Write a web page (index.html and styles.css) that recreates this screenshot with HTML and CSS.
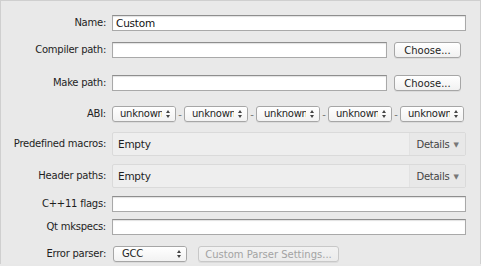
FILE: index.html
```html
<!DOCTYPE html>
<html lang="en">

<head>
	<meta charset="UTF-8">
	<title>Toolchain settings</title>
	<link rel="stylesheet" href="styles.css">
</head>

<body>

	<div class="panel">
		<div class="row row-name">
			<label class="label">Name:</label>
			<input class="field" type="text" value="Custom">
		</div>

		<div class="row row-compiler">
			<label class="label">Compiler path:</label>
			<input class="field path" type="text">
			<button class="push">Choose...</button>
		</div>

		<div class="row row-make">
			<label class="label">Make path:</label>
			<input class="field path" type="text">
			<button class="push">Choose...</button>
		</div>

		<div class="row row-abi">
			<label class="label">ABI:</label>
			<div class="abi">
				<div class="combo">unknown<span class="arrows"></span></div>
				<span class="dash">-</span>
				<div class="combo">unknown<span class="arrows"></span></div>
				<span class="dash">-</span>
				<div class="combo">unknown<span class="arrows"></span></div>
				<span class="dash">-</span>
				<div class="combo">unknown<span class="arrows"></span></div>
				<span class="dash">-</span>
				<div class="combo">unknown<span class="arrows"></span></div>
			</div>
		</div>

		<div class="row row-macros">
			<label class="label">Predefined macros:</label>
			<div class="details-box">
				<span class="empty">Empty</span>
				<span class="details">Details <span class="tri">&#9660;</span></span>
			</div>
		</div>

		<div class="row row-headers">
			<label class="label">Header paths:</label>
			<div class="details-box">
				<span class="empty">Empty</span>
				<span class="details">Details <span class="tri">&#9660;</span></span>
			</div>
		</div>

		<div class="row row-flags">
			<label class="label">C++11 flags:</label>
			<input class="field" type="text">
		</div>

		<div class="row row-mkspecs">
			<label class="label">Qt mkspecs:</label>
			<input class="field" type="text">
		</div>

		<div class="row row-parser">
			<label class="label">Error parser:</label>
			<div class="combo parser">GCC<span class="arrows"></span></div>
			<button class="push wide" disabled>Custom Parser Settings...</button>
		</div>
	</div>

</body>

</html>
```

FILE: styles.css
```css
body {
	margin: 0;
	background-color: #e8e8e8;
	font-family: "DejaVu Sans", "Liberation Sans", sans-serif;
	font-size: 10px;
	letter-spacing: -0.25px;
	color: #1e1e1e;
}

.panel {
	height: 264px;
	border: 1px solid #cfcfcf;
	border-bottom: none;
	background-color: #e9e9e9;
	padding-top: 14px;
	box-sizing: border-box;
}

.row {
	display: flex;
	align-items: center;
	height: 16px;
	padding-right: 14px;
}

.label {
	width: 105px;
	flex: none;
	text-align: right;
	margin-right: 6px;
	line-height: 12px;
}

.row-compiler { margin-top: 11px; padding-right: 19px; }
.row-make { margin-top: 17px; padding-right: 19px; }
.row-abi { margin-top: 15px; padding-right: 17px; }
.row-macros { margin-top: 10px; height: 24px; }
.row-headers { margin-top: 8px; height: 24px; }
.row-flags { margin-top: 8px; }
.row-mkspecs { margin-top: 7px; }
.row-parser { margin-top: 11px; }

.field {
	flex: 1;
	height: 16px;
	box-sizing: border-box;
	margin: 0;
	padding: 0 3px;
	border: 1px solid #a9a9a9;
	border-top-color: #8e8e8e;
	background: #ffffff;
	box-shadow: inset 0 1px 1px rgba(0, 0, 0, 0.12);
	font: inherit;
	font-size: 10.5px;
	letter-spacing: -0.2px;
	color: #111;
}

.path {
	margin-right: 7px;
}

/* --- Push buttons --- */
.push {
	width: 67px;
	height: 16px;
	flex: none;
	padding: 0;
	border: 1px solid #a6a6a6;
	border-radius: 3px;
	background: linear-gradient(#ffffff, #f1f1f1);
	box-shadow: 0 1px 0 rgba(0, 0, 0, 0.06);
	font: inherit;
	color: #1e1e1e;
}

.push.wide {
	width: 141px;
	margin-left: 11px;
	color: #a3a3a3;
	border-color: #c8c8c8;
	background: linear-gradient(#f2f2f2, #ebebeb);
}

/* --- Combo boxes --- */
.abi {
	display: flex;
	align-items: center;
	flex: 1;
}

.combo {
	position: relative;
	width: 64px;
	height: 16px;
	box-sizing: border-box;
	padding-left: 7px;
	line-height: 14px;
	border: 1px solid #a6a6a6;
	border-radius: 3px;
	background: linear-gradient(#ffffff, #f2f2f2);
	box-shadow: 0 1px 0 rgba(0, 0, 0, 0.06);
	overflow: hidden;
	white-space: nowrap;
}

.arrows {
	position: absolute;
	right: 0;
	top: 0;
	width: 13px;
	height: 14px;
	background: linear-gradient(#ffffff, #f2f2f2);
}

.arrows::before,
.arrows::after {
	content: "";
	position: absolute;
	left: 4px;
	border-left: 2.5px solid transparent;
	border-right: 2.5px solid transparent;
}

.arrows::before {
	top: 3px;
	border-bottom: 3px solid #444;
}

.arrows::after {
	top: 8px;
	border-top: 3px solid #444;
}

.dash {
	width: 8px;
	text-align: center;
	color: #777;
	font-size: 10px;
}

.combo.parser {
	width: 74px;
	margin-left: 1px;
	padding-left: 8px;
}

/* --- Details boxes --- */
.details-box {
	flex: 1;
	display: flex;
	height: 24px;
	box-sizing: border-box;
	border: 1px solid #dadada;
	border-radius: 2px;
	background: #eeeeee;
}

.empty {
	flex: 1;
	display: flex;
	align-items: center;
	padding-left: 5px;
	font-size: 10.5px;
}

.details {
	width: 55px;
	display: flex;
	align-items: center;
	justify-content: center;
	border-left: 1px solid #e2e2e2;
	background: #e8e8e8;
	color: #444;
}

.tri {
	font-size: 7px;
	color: #777;
	margin-left: 4px;
	margin-top: 2px;
}
```
